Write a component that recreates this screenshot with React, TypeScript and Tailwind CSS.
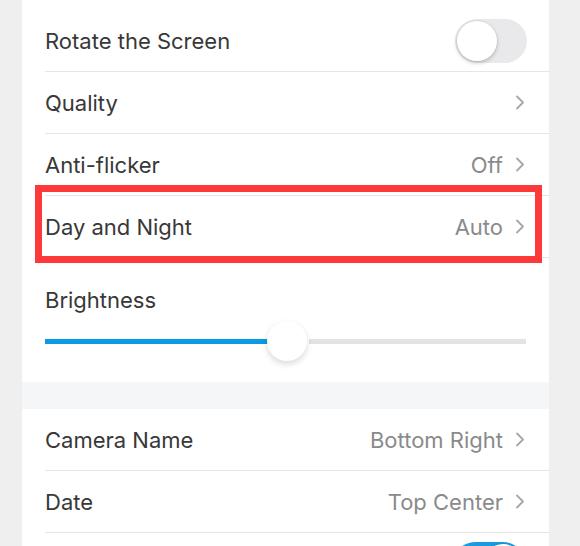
import React from 'react';

const font = { fontFamily: 'Inter, "Noto Sans", sans-serif' };

function Chevron() {
  return (
    <svg width="10" height="15" viewBox="0 0 10 15" className="shrink-0">
      <path d="M2 1.5 L8 7.5 L2 13.5" fill="none" stroke="#a6a6a6" strokeWidth="1.8" strokeLinecap="round" strokeLinejoin="round" />
    </svg>
  );
}

function Toggle({ on }: { on?: boolean }) {
  return (
    <div className={`w-[72px] h-[44px] rounded-full p-[2px] flex items-center ${on ? 'bg-[#1a9be0] justify-end' : 'bg-[#e9e9eb] justify-start'}`}>
      <div className="w-[40px] h-[40px] rounded-full bg-white shadow-[0_2px_4px_rgba(0,0,0,0.2),0_0_0_1px_rgba(0,0,0,0.04)]" />
    </div>
  );
}

function Row({ label, value, right, children }: { label: string; value?: string; right?: React.ReactNode; children?: React.ReactNode }) {
  return (
    <div className="relative ml-[23px] h-[62px] border-b border-[#e6e6e6] flex items-center justify-between pr-[24px]">
      <span className="text-[22px] text-[#383838] leading-none">{label}</span>
      {right ?? (
        <div className="flex items-center gap-[12px]">
          {value && <span className="text-[22px] text-[#8a8a8a] leading-none">{value}</span>}
          <Chevron />
        </div>
      )}
      {children}
    </div>
  );
}

export default function App() {
  return (
    <div className="w-[580px] h-[546px] overflow-hidden bg-[#efefef]" style={font}>
      <div className="ml-[22px] w-[527px] bg-white">
        <div className="h-[10px]" />
        <Row label="Rotate the Screen" right={<div className="-mr-[2px]"><Toggle /></div>} />
        <Row label="Quality" />
        <Row label="Anti-flicker" value="Off" />
        <Row label="Day and Night" value="Auto">
          <div className="absolute left-[-10px] top-[-11px] w-[507px] h-[78px] border-[7px] border-[#fc3a3a]" />
        </Row>
        <div className="h-[124px] px-[23px] pt-[31px]">
          <div className="text-[22px] text-[#383838] leading-none">Brightness</div>
          <div className="relative mt-[10px] h-[40px] flex items-center">
            <div className="h-[5px] w-[224px] bg-[#0a9be3]" />
            <div className="w-[40px] h-[40px] rounded-full bg-white shadow-[0_3px_6px_rgba(0,0,0,0.15)] -mx-[2px] relative z-10" />
            <div className="h-[5px] flex-1 ml-[4px] bg-[#e3e3e3]" />
          </div>
        </div>
        <div className="h-[27px] bg-[#f5f6f8]" />
        <Row label="Camera Name" value="Bottom Right" />
        <Row label="Date" value="Top Center" />
        <Row label="" right={<Toggle on />} />
      </div>
    </div>
  );
}
